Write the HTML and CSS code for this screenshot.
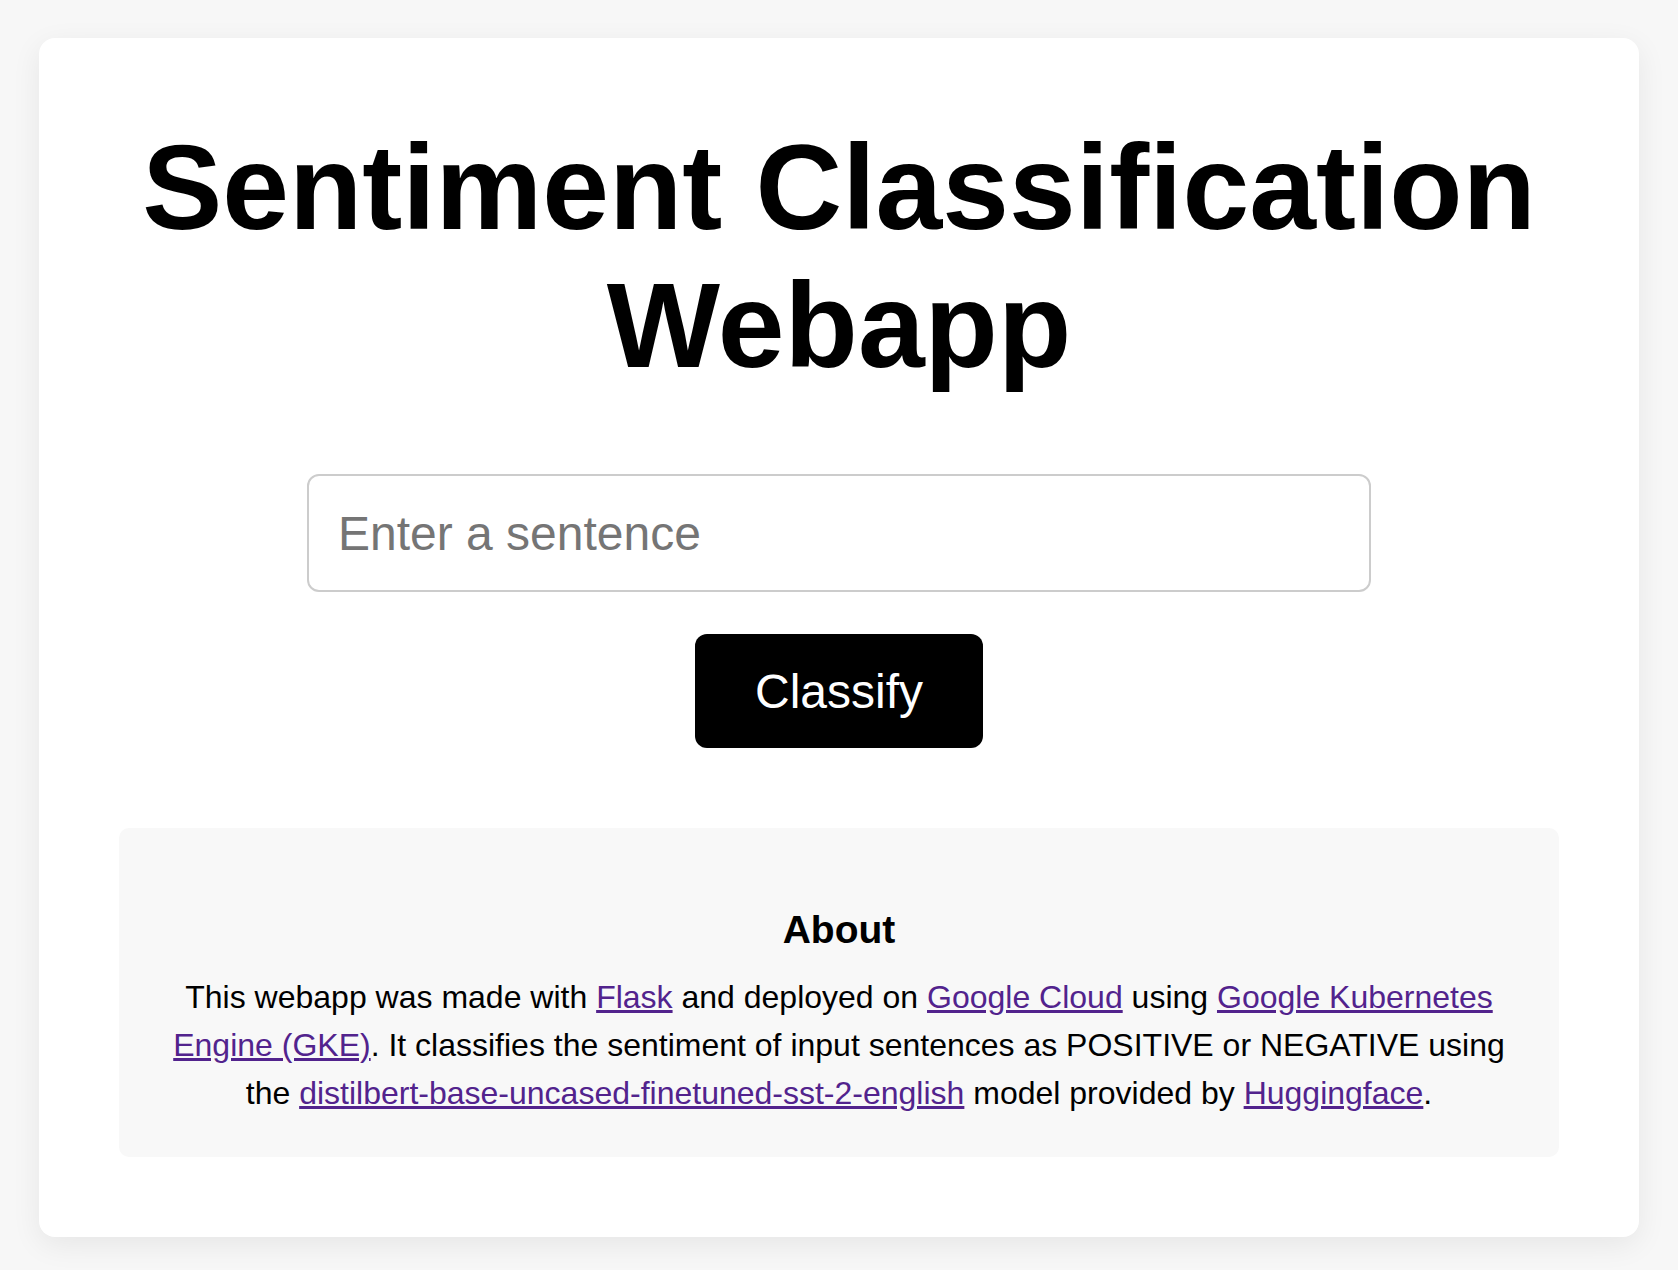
FILE: index.html
```html
<!DOCTYPE html>
<html lang="en">
<head>
<meta charset="utf-8">
<title>Sentiment Classification Webapp</title>
<link rel="stylesheet" href="styles.css">
</head>
<body>
<main class="card">
  <h1 class="title">Sentiment Classification Webapp</h1>
  <form class="form">
    <input class="sentence" type="text" placeholder="Enter a sentence">
    <button class="classify" type="button">Classify</button>
  </form>
  <section class="about">
    <h2 class="about-title">About</h2>
    <p class="about-text">This webapp was made with <a href="#">Flask</a> and deployed on <a href="#">Google Cloud</a> using <a href="#">Google Kubernetes Engine (GKE)</a>. It classifies the sentiment of input sentences as POSITIVE or NEGATIVE using the <a href="#">distilbert-base-uncased-finetuned-sst-2-english</a> model provided by <a href="#">Huggingface</a>.</p>
  </section>
</main>
</body>
</html>
```
FILE: styles.css
```css
html, body {
  margin: 0;
  padding: 0;
}
body {
  background: #f7f7f7;
  font-family: "Liberation Sans", Arial, sans-serif;
  color: #000;
  padding: 38px 0 33px;
}
.card {
  box-sizing: border-box;
  width: 1600px;
  margin: 0 auto;
  background: #fff;
  border-radius: 16px;
  box-shadow: 0 8px 30px rgba(0, 0, 0, 0.07);
  padding: 80px 80px;
  display: flex;
  flex-direction: column;
  align-items: center;
}
.title {
  margin: 0 0 80px;
  font-size: 120px;
  font-weight: 700;
  line-height: normal;
  text-align: center;
}
.form {
  display: flex;
  flex-direction: column;
  align-items: center;
  gap: 42px;
  margin: 0 0 80px;
}
.sentence {
  box-sizing: border-box;
  width: 1064px;
  height: 118px;
  font-family: "Liberation Sans", Arial, sans-serif;
  font-size: 48px;
  line-height: normal;
  padding: 0 29px;
  border: 2px solid #cccccc;
  border-radius: 12px;
  background: #fff;
  color: #000;
  outline: none;
}
.sentence::placeholder {
  color: #757575;
}
.classify {
  box-sizing: border-box;
  height: 114px;
  font-family: "Liberation Sans", Arial, sans-serif;
  font-size: 48px;
  line-height: normal;
  padding: 0 60px;
  border: none;
  border-radius: 12px;
  background: #000;
  color: #fff;
  cursor: pointer;
}
.about {
  box-sizing: border-box;
  width: 100%;
  background: #f8f8f8;
  border-radius: 10px;
  padding: 80px 48px 40px;
  text-align: center;
}
.about-title {
  margin: 0 0 21px;
  font-size: 39px;
  font-weight: 700;
  line-height: normal;
}
.about-text {
  margin: 0;
  font-size: 32px;
  line-height: 48px;
}
.about-text a {
  color: #52238d;
  text-decoration: underline;
}
```
